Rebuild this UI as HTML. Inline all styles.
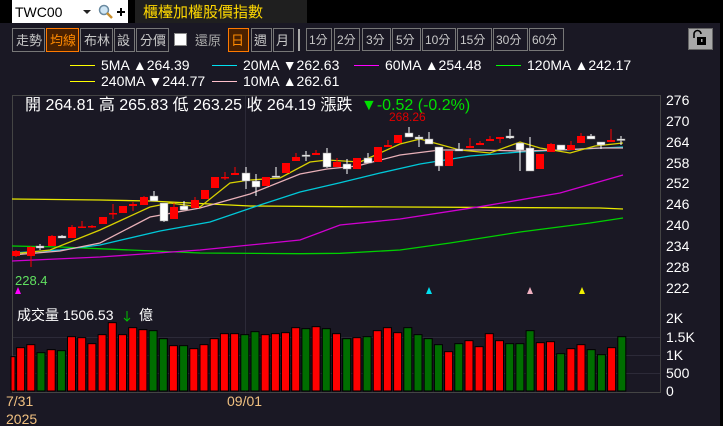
<!DOCTYPE html>
<html><head><meta charset="utf-8"><style>
html,body{margin:0;padding:0;background:#1a1824;width:723px;height:426px;overflow:hidden}
svg{display:block}
text{font-family:"Liberation Sans","Noto Sans CJK TC",sans-serif}
</style></head><body>
<svg id="s" width="723" height="426" viewBox="0 0 723 426" xmlns="http://www.w3.org/2000/svg">
<rect x="0" y="0" width="723" height="426" fill="#1a1824"/>
<rect x="0" y="0" width="723" height="23" fill="#000"/>
<rect x="720" y="0" width="3" height="426" fill="#000"/>
<rect x="12" y="0" width="116" height="23" fill="#fff"/>
<text x="15" y="17" font-size="14" fill="#000">TWC00</text>
<path d="M83 10 L91 10 L87 14 Z" fill="#222"/>
<circle cx="104" cy="10" r="4.5" fill="#cfe6f5" stroke="#6a8aa0" stroke-width="1.5"/>
<path d="M107 13 L112 18" stroke="#c89030" stroke-width="2.5"/>
<path d="M117 12 H125 M121 8 V16" stroke="#000" stroke-width="2"/>
<rect x="135" y="0" width="172" height="23" fill="#1f1f1f"/>
<text x="143" y="17" font-size="15" fill="#ffd800">櫃檯加權股價指數</text>
<g font-size="13" fill="#c8c8c8" stroke-width="1">
<rect x="12.5" y="28.5" width="32" height="23" fill="none" stroke="#777"/><text x="16" y="45">走勢</text>
<rect x="46.5" y="28.5" width="32" height="23" fill="#4a2100" stroke="#ff7a00"/><text x="50" y="45" fill="#ff8a00">均線</text>
<rect x="80.5" y="28.5" width="32" height="23" fill="none" stroke="#777"/><text x="84" y="45">布林</text>
<rect x="114.5" y="28.5" width="20" height="23" fill="none" stroke="#777"/><text x="117" y="45">設</text>
<rect x="136.5" y="28.5" width="32" height="23" fill="none" stroke="#777"/><text x="140" y="45">分價</text>
<rect x="174.5" y="33.5" width="12" height="12" fill="#fff" stroke="#888"/>
<text x="195" y="45" fill="#aaa">還原</text>
<rect x="228.5" y="28.5" width="20" height="23" fill="#4a2100" stroke="#ff7a00"/><text x="231" y="45" fill="#ff8a00">日</text>
<rect x="251.5" y="28.5" width="20" height="23" fill="none" stroke="#777"/><text x="254" y="45">週</text>
<rect x="273.5" y="28.5" width="20" height="23" fill="none" stroke="#777"/><text x="276" y="45">月</text>
<rect x="298" y="29" width="2" height="22" fill="#aaa"/>
</g>
<g font-size="12" fill="#c8c8c8">
<rect x="306.5" y="28.5" width="25" height="22" fill="none" stroke="#777"/><text x="309" y="44">1分</text>
<rect x="334.5" y="28.5" width="25" height="22" fill="none" stroke="#777"/><text x="337" y="44">2分</text>
<rect x="362.5" y="28.5" width="28" height="22" fill="none" stroke="#777"/><text x="366" y="44">3分</text>
<rect x="392.5" y="28.5" width="28" height="22" fill="none" stroke="#777"/><text x="396" y="44">5分</text>
<rect x="422.5" y="28.5" width="33" height="22" fill="none" stroke="#777"/><text x="425" y="44">10分</text>
<rect x="457.5" y="28.5" width="34" height="22" fill="none" stroke="#777"/><text x="460" y="44">15分</text>
<rect x="493.5" y="28.5" width="34" height="22" fill="none" stroke="#777"/><text x="496" y="44">30分</text>
<rect x="529.5" y="28.5" width="34" height="22" fill="none" stroke="#777"/><text x="532" y="44">60分</text>
</g>
<rect x="688.5" y="28.5" width="24" height="21" fill="#a8a8a8" stroke="#666"/>
<path d="M694 38 V34 A3.5 3.5 0 0 1 701 34" fill="none" stroke="#000" stroke-width="1.6"/>
<rect x="697" y="37" width="9" height="8" fill="#000"/><rect x="701" y="39" width="1.5" height="3" fill="#aaa"/>
<rect x="70" y="65" width="25" height="1" fill="#ffff00"/>
<rect x="212" y="65" width="25" height="1" fill="#00e0f0"/>
<rect x="354" y="65" width="25" height="1" fill="#ff00ff"/>
<rect x="496" y="65" width="25" height="1" fill="#00ff00"/>
<rect x="70" y="81" width="25" height="1" fill="#ffff00"/>
<rect x="212" y="81" width="25" height="1" fill="#ffc0cc"/>
<g font-size="14" fill="#fff">
<text x="101" y="70">5MA ▲264.39</text>
<text x="243" y="70">20MA ▼262.63</text>
<text x="385" y="70">60MA ▲254.48</text>
<text x="527" y="70">120MA ▲242.17</text>
<text x="101" y="86">240MA ▼244.77</text>
<text x="243" y="86">10MA ▲262.61</text>
</g>
<rect x="12.5" y="95.5" width="648" height="297" fill="none" stroke="#444"/>
<path d="M245.5 96 V392" stroke="#2c2a38"/>
<path d="M13 337.5 H660 M13 355.5 H660 M13 373.5 H660" stroke="#2c2a38"/>
<text x="25" y="110" font-size="16" fill="#fff">開 264.81  高 265.83  低 263.25  收 264.19  漲跌</text>
<text x="361" y="110" font-size="16" fill="#00e000">▼-0.52 (-0.2%)</text>
<text x="389" y="121" font-size="12" fill="#e00000">268.26</text>
<text x="15" y="285" font-size="13" fill="#60e060">228.4</text>
<g font-size="14" fill="#fff">
<text x="666" y="105">276</text><text x="666" y="126">270</text><text x="666" y="147">264</text><text x="666" y="168">258</text><text x="666" y="188">252</text><text x="666" y="209">246</text><text x="666" y="230">240</text><text x="666" y="251">234</text><text x="666" y="272">228</text><text x="666" y="293">222</text>
<text x="666" y="323">2K</text><text x="666" y="342">1.5K</text><text x="666" y="360">1K</text><text x="666" y="378">500</text><text x="666" y="396">0</text>
</g>
<path d="M15 294 L18 287 L21 294Z" fill="#ff00ff"/>
<path d="M426 294 L429 287 L432 294Z" fill="#00e0f0"/>
<path d="M527 294 L530 287 L533 294Z" fill="#f0b0c0"/>
<path d="M579 294 L582 287 L585 294Z" fill="#f0f000"/>
<text x="17" y="320" font-size="14" fill="#fff">成交量  1506.53</text>
<path d="M127 311 V321 M124 318 L127 321 L130 318" stroke="#00c000" fill="none"/>
<text x="139" y="320" font-size="14" fill="#fff">億</text>
<g font-size="14" fill="#f0c080">
<text x="6" y="406">7/31</text><text x="227" y="406">09/01</text><text x="6" y="424">2025</text>
</g>
<g fill="none" stroke-width="1.3">
<polyline stroke="#e8e800" points="12,199 100,200 150,201 250,206 340,206.7 600,208 623,209"/>
<polyline stroke="#00d000" points="12,246 60,247 200,253 300,253.7 340,253.3 400,250 450,243 520,232 590,223 623,218"/>
<polyline stroke="#d000d0" points="12,261 100,257 200,250 300,240 340,225 400,219 480,206.7 560,193 623,175"/>
<polyline stroke="#00c8d8" points="12,253 60,250 100,245 160,231 210,222 260,205 300,192 340,182.7 380,173 420,164 470,156 520,152 623,147"/>
<polyline stroke="#e8b0b8" points="12,255 60,251 100,243 150,217 200,208 250,194 300,174 327,169 357,166 400,155 440,150 480,150 520,151 560,150 600,148 623,148"/>
<polyline stroke="#d8d000" points="12,254 50,250 100,230 150,207 170,203 200,207 230,183 250,180 280,178 310,162 327,160 360,162 400,144 420,139 460,150 490,153 520,142 540,148 570,153 595,146 623,143"/>
</g>
<g id="c"></g><g id="v"></g>
</svg>
<script>
var NS="http://www.w3.org/2000/svg";
function el(p,t,a){var e=document.createElementNS(NS,t);for(var k in a)e.setAttribute(k,a[k]);p.appendChild(e);}
var C=[[16,251,256,250,257,'r'],[31,247,256,246,267,'r'],[40,246,248,244,250,'w'],[52,236,246,235,246,'r'],[62,236,238,235,238,'w'],[72,227,238,225,238,'r'],[82,226.5,227.5,221,228,'r'],[92,226,227,225,228,'r'],[103,217,224,217,224,'r'],[113,213,214,204,219,'r'],[123,206,213,206,213,'r'],[133,204,206,202,211,'r'],[144,197,205,196,205,'r'],[154,196,201,191,201,'w'],[164,203,221,203,222,'w'],[174,207,219,203,219,'r'],[184,206,210,201,210,'w'],[195,200,208,197,208,'r'],[205,190,199,190,199,'r'],[215,177,188,177,188,'r'],[225,177,178,172,180,'r'],[235,173,175,167,175,'r'],[246,173,181,167,189,'w'],[256,181,187,174,196,'w'],[266,177,186,177,186,'r'],[276,176,177,167,177,'w'],[286,163,173,163,173,'r'],[296,157,161,153,161,'r'],[306,155,156,151,161,'w'],[316,153,155,150,155,'r'],[327,153,167,148,168,'w'],[337,162,167,158,167,'r'],[347,164,169,159,174,'w'],[357,158,169,158,169,'r'],[368,158,163,153,163,'w'],[378,147,162,147,162,'r'],[388,145,147,140,147,'r'],[398,135,143,135,143,'r'],[409,133,137,127,137,'w'],[419,137,139,135,147,'w'],[429,139,144,132,144,'w'],[439,147,166,147,171,'w'],[449,151,166,151,166,'r'],[459,149,151,143,151,'w'],[470,146,148,138,148,'r'],[480,143,145,141,145,'r'],[490,139,141,136,141,'r'],[500,137,139,137,143,'r'],[510,136,138,129,139,'w'],[520,143,150,143,171,'w'],[530,148,171,137,171,'w'],[540,154,169,154,169,'r'],[551,144,152,143,152,'r'],[561,145,150,145,150,'w'],[571,145,150,141,150,'r'],[581,136,143,133,143,'r'],[591,136,139,134,139,'w'],[601,142,145,142,149,'w'],[611,140,142,129,142,'r'],[621,139,140,136,145,'w']];
var g=document.getElementById('c');
C.forEach(function(c){var col=c[5]=='r'?'#ff0000':'#ffffff';
el(g,'line',{x1:c[0],x2:c[0],y1:c[3],y2:c[4],stroke:col,'stroke-width':1});
el(g,'rect',{x:c[0]-4,y:c[1],width:8,height:Math.max(1.5,c[2]-c[1]),fill:col,stroke:c[5]=='w'?'#888':'none','stroke-width':0.5});});
var V=[[203,'r'],[194,'r'],[218,'g'],[209,'r'],[212,'g'],[170,'r'],[173,'r'],[191,'r'],[164,'r'],[128,'r'],[164,'r'],[143,'r'],[149,'r'],[152,'g'],[176,'g'],[197,'r'],[197,'g'],[206,'r'],[194,'r'],[176,'r'],[161,'r'],[161,'r'],[164,'g'],[155,'g'],[164,'r'],[161,'r'],[158,'r'],[143,'r'],[146,'g'],[140,'r'],[146,'g'],[161,'r'],[176,'g'],[173,'r'],[170,'g'],[152,'r'],[143,'r'],[158,'r'],[143,'g'],[164,'g'],[176,'g'],[194,'g'],[215,'r'],[191,'g'],[182,'r'],[200,'r'],[161,'r'],[182,'r'],[191,'g'],[191,'g'],[152,'g'],[188,'r'],[185,'r'],[221,'g'],[206,'r'],[194,'r'],[209,'g'],[224,'g'],[203,'r'],[170,'g']];
var v=document.getElementById('v');
el(v,'rect',{x:11,y:391-(333-230)/3,width:4,height:(333-230)/3,fill:'#ff0000',stroke:'#000'});
V.forEach(function(b,i){var h=(333-b[0])/3;el(v,'rect',{x:(16.6+10.19*i).toFixed(1),y:391-h,width:8,height:h,fill:b[1]=='r'?'#ff0000':'#006e00',stroke:'#000','stroke-width':1});});
</script>
</body></html>
